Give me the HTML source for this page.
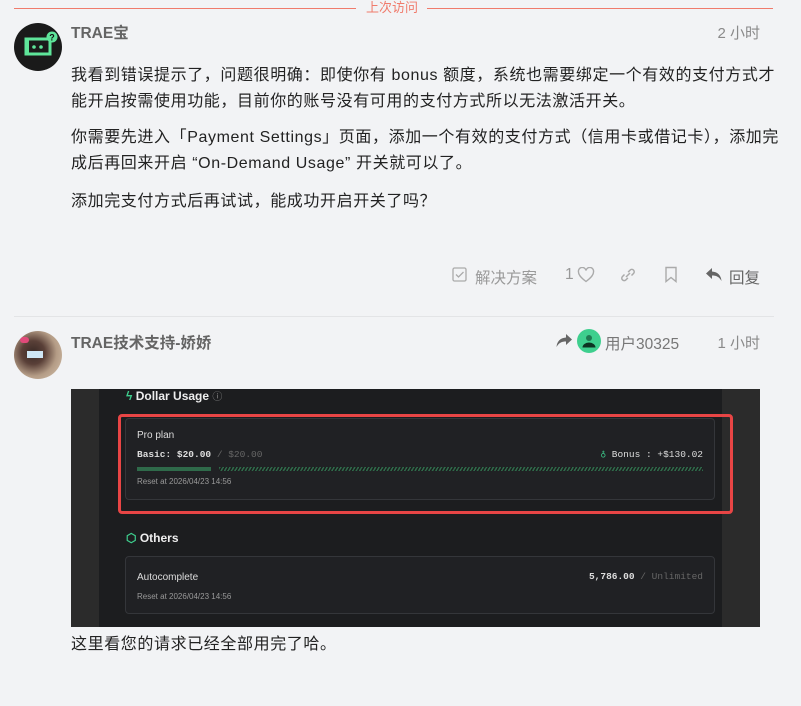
<!DOCTYPE html>
<html><head><meta charset="utf-8"><style>
*{margin:0;padding:0;box-sizing:border-box}
body{width:801px;height:706px;background:#f2f3f5;font-family:"Liberation Sans","Noto Sans CJK SC",sans-serif;color:#222;position:relative;overflow:hidden}
.a{position:absolute;white-space:nowrap}
.p{font-size:16px;line-height:26px;left:71px;letter-spacing:0.6px}
.name{font-size:15.5px;font-weight:bold;color:#646464}
.meta{font-size:15px;color:#8a8a8a}
.mono{font-family:"Liberation Mono","DejaVu Sans Mono",monospace}
</style></head><body>
<div class="a" style="left:14px;top:8px;width:342px;height:1px;background:#f07b6c"></div>
<div class="a" style="left:366px;top:0;font-size:13px;color:#f07b6c;line-height:15px">上次访问</div>
<div class="a" style="left:427px;top:8px;width:346px;height:1px;background:#f07b6c"></div>

<div class="a" style="left:14px;top:23px;width:48px;height:48px;border-radius:50%;background:#1a1a1a"></div>
<svg class="a" style="left:14px;top:23px" width="48" height="48"><rect x="12" y="16" width="24" height="15" fill="none" stroke="#5ee59a" stroke-width="3"/><rect x="16" y="19" width="3" height="8" fill="#1a1a1a"/><path d="M12 16 h3 v15 h-3z" fill="#5ee59a"/><circle cx="20" cy="24" r="1.8" fill="#5ee59a"/><circle cx="27" cy="24" r="1.8" fill="#5ee59a"/><circle cx="38" cy="14" r="5.5" fill="#5ee59a"/><text x="38" y="17.5" font-size="9" font-weight="bold" text-anchor="middle" fill="#111" font-family="Liberation Sans">?</text></svg>
<div class="a name" style="left:71px;top:21px">TRAE宝</div>
<div class="a meta" style="right:41px;top:22px">2 小时</div>

<div class="a p" style="top:63px">我看到错误提示了，问题很明确：即使你有 bonus 额度，系统也需要绑定一个有效的支付方式才<br>能开启按需使用功能，目前你的账号没有可用的支付方式所以无法激活开关。</div>
<div class="a p" style="top:125px">你需要先进入「Payment Settings」页面，添加一个有效的支付方式（信用卡或借记卡），添加完<br>成后再回来开启 “On-Demand Usage” 开关就可以了。</div>
<div class="a p" style="top:189px">添加完支付方式后再试试，能成功开启开关了吗？</div>

<svg class="a" style="left:452px;top:267px" width="15" height="15"><rect x="1" y="1" width="13" height="13" rx="1.5" fill="none" stroke="#aaa" stroke-width="1.3"/><path d="M4 7.5l2.5 2.5 5-5" fill="none" stroke="#aaa" stroke-width="1.3"/></svg>
<div class="a meta" style="left:475px;top:266px;color:#999;font-size:15.5px">解决方案</div>
<div class="a meta" style="left:565px;top:266px;color:#999;font-size:15.5px">1</div>
<svg class="a" style="left:577px;top:267px" width="18" height="16"><path d="M9 14.5 C3 10 1.5 7.5 1.5 5 A3.8 3.8 0 0 1 9 3.5 A3.8 3.8 0 0 1 16.5 5 C16.5 7.5 15 10 9 14.5z" fill="none" stroke="#aaa" stroke-width="1.4"/></svg>
<svg class="a" style="left:619px;top:268px" width="18" height="14"><path d="M7 9 L11 5 M5.5 6.5 l-2 2 a2.4 2.4 0 0 0 3.4 3.4 l2-2 M12.5 7.5 l2-2 a2.4 2.4 0 0 0 -3.4 -3.4 l-2 2" fill="none" stroke="#aaa" stroke-width="1.5"/></svg>
<svg class="a" style="left:664px;top:266px" width="14" height="17"><path d="M2 1.5h10v14l-5-4-5 4z" fill="none" stroke="#aaa" stroke-width="1.4"/></svg>
<svg class="a" style="left:705px;top:267px" width="18" height="15"><path d="M7 1 L1 6.5 L7 12 V8.5 C11 8.5 14 9.5 16.5 14 C16 8.5 13 5 7 4.5z" fill="#666"/></svg>
<div class="a meta" style="left:729px;top:266px;color:#666;font-size:15.5px">回复</div>

<div class="a" style="left:14px;top:316px;width:760px;height:1px;background:#e3e4e6"></div>

<div class="a" style="left:14px;top:331px;width:48px;height:48px;border-radius:50%;background:radial-gradient(circle at 40% 45%,#3a2a26 0,#5a4038 30%,#b49c86 60%,#d9c6b0 100%);overflow:hidden"><div style="position:absolute;left:13px;top:20px;width:16px;height:7px;background:#cfe6f5"></div><div style="position:absolute;left:6px;top:6px;width:9px;height:6px;background:#e04a7a;border-radius:3px"></div></div>
<div class="a name" style="left:71px;top:331px">TRAE技术支持-娇娇</div>
<svg class="a" style="left:556px;top:333px" width="17" height="15"><path d="M10 1 L16 6.5 L10 12 V8.5 C6 8.5 3 9.5 0.5 14 C1 8.5 4 5 10 4.5z" fill="#666"/></svg>
<svg class="a" style="left:577px;top:329px" width="24" height="24"><circle cx="12" cy="12" r="12" fill="#3ecf8e"/><circle cx="12" cy="9" r="3" fill="#1f7a52"/><path d="M5.5 18.5 a6.5 5 0 0 1 13 0z" fill="#0d3322"/></svg>
<div class="a meta" style="left:605px;top:332px;color:#777;font-size:15.5px">用户30325</div>
<div class="a meta" style="right:41px;top:332px">1 小时</div>

<div class="a" style="left:71px;top:389px;width:689px;height:238px;background:#2b2b2b">
 <div class="a" style="left:28px;top:0;width:623px;height:238px;background:#1c1d1f"></div>
 <div class="a" style="left:55px;top:0;font-size:12px;color:#eee;font-weight:bold;line-height:14px"><span style="color:#3ecf8e">ϟ</span> Dollar Usage <span style="color:#888;font-weight:normal;font-size:10px">ⓘ</span></div>
 <div class="a" style="left:47px;top:25px;width:615px;height:100px;border:3px solid #e84545;border-radius:4px"></div>
 <div class="a" style="left:54px;top:29px;width:590px;height:82px;border:1px solid #34363a;border-radius:4px;background:#202124"></div>
 <div class="a" style="left:66px;top:41px;font-size:10px;color:#ddd">Pro plan</div>
 <div class="a mono" style="left:66px;top:60px;font-size:9.5px;color:#ddd;font-weight:bold">Basic: $20.00 <span style="color:#666;font-weight:normal">/ $20.00</span></div>
 <div class="a mono" style="right:57px;top:60px;font-size:9.5px;color:#ddd"><span style="color:#3ecf8e">♁</span> Bonus : +$130.02</div>
 <div class="a" style="left:66px;top:78px;width:74px;height:4px;background:#2f6a4a"></div>
 <div class="a" style="left:148px;top:78px;width:484px;height:4px;background:repeating-linear-gradient(120deg,#2f6a4a 0 1.5px,#1c1d1f 1.5px 3px)"></div>
 <div class="a" style="left:66px;top:88px;font-size:8px;color:#999">Reset at 2026/04/23 14:56</div>
 <div class="a" style="left:55px;top:142px;font-size:12px;color:#eee;font-weight:bold"><span style="color:#3ecf8e">⬡</span> Others</div>
 <div class="a" style="left:54px;top:167px;width:590px;height:58px;border:1px solid #34363a;border-radius:4px;background:#202124"></div>
 <div class="a" style="left:66px;top:183px;font-size:10px;color:#ddd">Autocomplete</div>
 <div class="a mono" style="right:57px;top:182px;font-size:9.5px;color:#ddd;font-weight:bold">5,786.00 <span style="color:#666;font-weight:normal">/ Unlimited</span></div>
 <div class="a" style="left:66px;top:203px;font-size:8px;color:#999">Reset at 2026/04/23 14:56</div>
</div>

<div class="a p" style="top:632px">这里看您的请求已经全部用完了哈。</div>
</body></html>
